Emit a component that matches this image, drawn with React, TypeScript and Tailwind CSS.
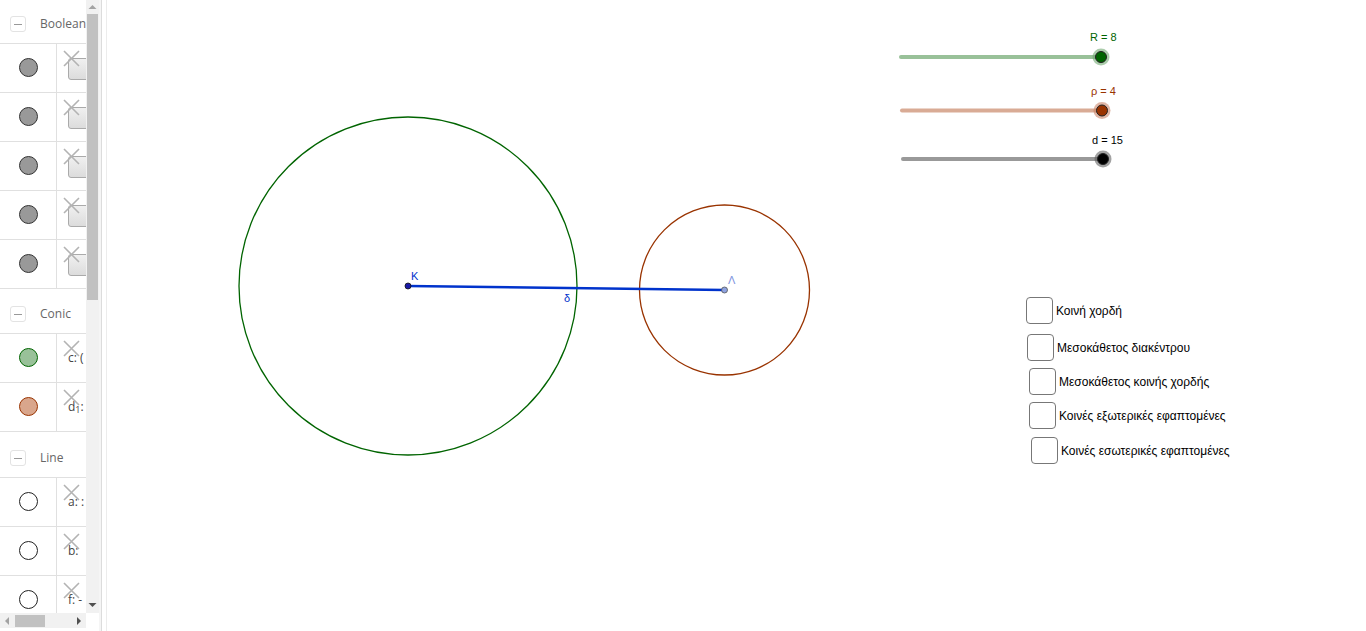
import React from "react";

type Row = { fill: string; stroke: string; label?: React.ReactNode; box?: boolean };

const groups: { title: string; h: string; rows: Row[] }[] = [
  {
    title: "Boolean",
    h: "h-[44px]",
    rows: Array.from({ length: 5 }, () => ({ fill: "#999999", stroke: "#333333", box: true })),
  },
  {
    title: "Conic",
    h: "h-[45px]",
    rows: [
      { fill: "#99c199", stroke: "#006400", label: <>c: (</> },
      { fill: "#d9a68c", stroke: "#993300", label: <>d<sub className="text-[9px]">1</sub>:</> },
    ],
  },
  {
    title: "Line",
    h: "h-[46px]",
    rows: [
      { fill: "#ffffff", stroke: "#222222", label: <>a: :</> },
      { fill: "#ffffff", stroke: "#222222", label: <>b:</> },
      { fill: "#ffffff", stroke: "#222222", label: <>f: -</> },
    ],
  },
];

const checks = [
  { x: 1026, y: 297, text: "Κοινή χορδή" },
  { x: 1027, y: 334, text: "Μεσοκάθετος διακέντρου" },
  { x: 1029, y: 368, text: "Μεσοκάθετος κοινής χορδής" },
  { x: 1029, y: 402, text: "Κοινές εξωτερικές εφαπτομένες" },
  { x: 1031, y: 437, text: "Κοινές εσωτερικές εφαπτομένες" },
];

function CrossIcon() {
  return (
    <svg width="17" height="17" viewBox="0 0 17 17" className="absolute left-[6px] top-[6px]">
      <path d="M1 1 L16 16 M16 1 L1 16" stroke="#b3b3b3" strokeWidth="1.6" />
    </svg>
  );
}

function Sidebar() {
  return (
    <div className="flex h-[631px] w-[107px] shrink-0">
      <div className="flex w-[86px] flex-col">
        <div className="h-[613px] overflow-hidden">
          {groups.map((g) => (
            <div key={g.title}>
              <div className={`flex items-end gap-[14px] border-b border-[#e0e0e0] pb-[11px] pl-[10px] ${g.h}`}>
                <div className="flex h-[16px] w-[16px] items-center justify-center rounded-[3px] border border-[#e3e3e3]">
                  <div className="h-[1px] w-[8px] bg-[#999]" />
                </div>
                <span className="text-[12px] leading-[16px] text-[#666]">{g.title}</span>
              </div>
              {g.rows.map((r, i) => (
                <div key={i} className="flex h-[49px] border-b border-[#e0e0e0]">
                  <div className="flex w-[57px] shrink-0 justify-center border-r border-[#e0e0e0] pt-[14px]">
                    <div
                      className="h-[19px] w-[19px] rounded-full border"
                      style={{ background: r.fill, borderColor: r.stroke }}
                    />
                  </div>
                  <div className="relative flex-1 overflow-hidden">
                    {r.box && (
                      <div className="absolute left-[11px] top-[14px] h-[22px] w-[30px] rounded-[3px] border border-[#aaaaaa] bg-gradient-to-b from-[#f0f0f0] to-[#dcdcdc]" />
                    )}
                    {r.label && (
                      <span className="absolute left-[11px] top-[18px] text-[12px] leading-none text-[#444]">{r.label}</span>
                    )}
                    <CrossIcon />
                  </div>
                </div>
              ))}
            </div>
          ))}
        </div>
        <div className="flex h-[15px] items-center bg-[#f1f1f1] px-[3px]">
          <svg width="8" height="10" viewBox="0 0 8 10"><path d="M6 1 L2 5 L6 9 Z" fill="#a3a3a3" /></svg>
          <div className="ml-[4px] h-[12px] w-[30px] bg-[#c1c1c1]" />
          <div className="flex-1" />
          <svg width="8" height="10" viewBox="0 0 8 10"><path d="M2 1 L6 5 L2 9 Z" fill="#505050" /></svg>
        </div>
      </div>
      <div className="flex w-[13px] flex-col">
        <div className="flex h-[613px] flex-col items-center bg-[#f1f1f1]">
          <svg width="9" height="12" viewBox="0 0 9 12" className="mt-[1px]"><path d="M0.5 8 L4.5 4 L8.5 8 Z" fill="#a3a3a3" /></svg>
          <div className="mt-[1px] h-[286px] w-[11px] bg-[#c1c1c1]" />
          <div className="flex-1" />
          <svg width="9" height="12" viewBox="0 0 9 12" className="mb-[2px]"><path d="M0.5 4 L4.5 8 L8.5 4 Z" fill="#505050" /></svg>
        </div>
        <div className="flex-1 bg-white" />
      </div>
      <div className="w-[2px] bg-[#f5f5f5]" />
      <div className="w-[1px] bg-[#dcdcdc]" />
      <div className="w-[4px] bg-white" />
      <div className="w-[1px] bg-[#ececec]" />
    </div>
  );
}

function Slider({ y, x1, x2, track, thumb, halo, label, labelColor, lx, ly }: {
  y: number; x1: number; x2: number; track: string; thumb: string; halo: string; label: string; labelColor: string; lx: number; ly: number;
}) {
  return (
    <g>
      <line x1={x1} y1={y} x2={x2} y2={y} stroke={track} strokeWidth="4" strokeLinecap="round" />
      <circle cx={x2} cy={y} r="8.5" fill={halo} opacity="0.55" />
      <circle cx={x2} cy={y} r="5.5" fill={thumb} stroke="#222" strokeWidth="1" />
      <text x={lx} y={ly} fontSize="11" fill={labelColor} fontFamily="'Liberation Sans', Arial, sans-serif">{label}</text>
    </g>
  );
}

function Canvas() {
  return (
    <div className="relative h-[631px] flex-1 overflow-hidden bg-white">
      <svg width="1259" height="631" viewBox="107 0 1259 631" className="absolute left-0 top-0">
        <circle cx="408" cy="286" r="169" fill="none" stroke="#006400" strokeWidth="1.3" />
        <circle cx="724.5" cy="290" r="85" fill="none" stroke="#993300" strokeWidth="1.3" />
        <line x1="408" y1="286" x2="724.5" y2="290" stroke="#0033cc" strokeWidth="2.6" />
        <circle cx="408" cy="286" r="3" fill="#1a1aa6" stroke="#111" strokeWidth="0.8" />
        <circle cx="724.5" cy="290" r="3" fill="#8ea2e0" stroke="#555" strokeWidth="0.8" />
        <g fontFamily="'Liberation Sans', Arial, sans-serif" fontSize="11">
          <text x="411" y="280" fill="#0033cc">Κ</text>
          <text x="564" y="302" fill="#0033cc">δ</text>
          <text x="728" y="284" fill="#7f94e0">Λ</text>
        </g>
        <Slider y={57} x1={901} x2={1101} track="#99c199" thumb="#006400" halo="#66a366" label="R = 8" labelColor="#006400" lx={1090} ly={41} />
        <Slider y={110.5} x1={902} x2={1102} track="#d9ab95" thumb="#993300" halo="#c47a5c" label="ρ = 4" labelColor="#993300" lx={1091} ly={95} />
        <Slider y={159} x1={903} x2={1103} track="#999999" thumb="#000000" halo="#555555" label="d = 15" labelColor="#000000" lx={1092} ly={144} />
      </svg>
      {checks.map((c) => (
        <div
          key={c.text}
          className="absolute flex items-center gap-[3px]"
          style={{ left: c.x - 107, top: c.y }}
        >
          <div className="h-[27px] w-[27px] rounded-[4px] border-[1.5px] border-[#777] bg-white" />
          <span className="text-[12px] text-black" style={{ fontFamily: "'Liberation Sans', Arial, sans-serif" }}>{c.text}</span>
        </div>
      ))}
    </div>
  );
}

export default function App() {
  return (
    <div className="flex h-[631px] w-[1366px] overflow-hidden bg-white" style={{ fontFamily: "'Open Sans', 'Noto Sans', sans-serif" }}>
      <Sidebar />
      <Canvas />
    </div>
  );
}
